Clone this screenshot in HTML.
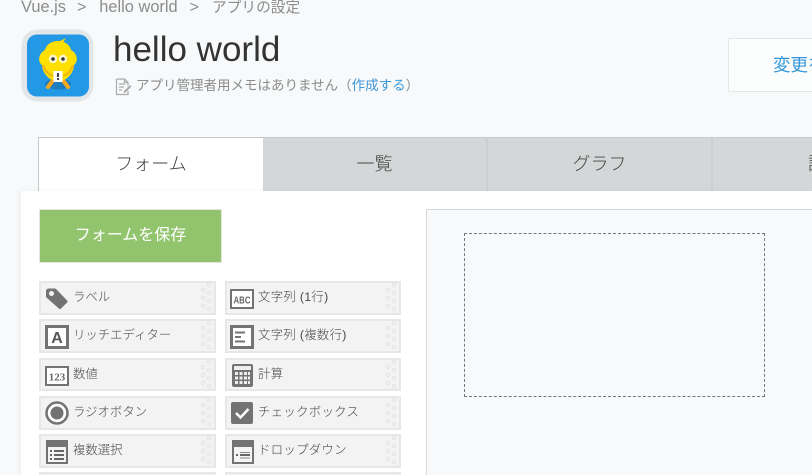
<!DOCTYPE html>
<html lang="ja"><head><meta charset="utf-8"><title>アプリの設定</title>
<style>
html,body{margin:0;padding:0;width:812px;height:475px;overflow:hidden}
body{background:#f7f9fa;font-family:"Liberation Sans","Noto Sans CJK JP",sans-serif;color:#333}
#w{position:relative;width:812px;height:475px;overflow:hidden}
.a{position:absolute;white-space:nowrap}
.tab{position:absolute;top:137px;height:53px;line-height:52px;text-align:center;background:#d4d7d7;border-top:1px solid #c6c9c9;border-right:2px solid #cccfcf;font-size:18px;font-weight:300;color:#444}
.it{position:absolute;width:173px;height:30px;background:#f2f3f2;border:2px solid #e6e8e7;font-size:12.400px;line-height:29px;color:#4a4a4a;font-weight:300}
.it span{position:absolute;left:32px;top:0;white-space:nowrap}
.it span.r{left:31px;letter-spacing:.3px}
.it svg{position:absolute}
.it i{position:absolute;right:2px;top:-2px;width:6px;height:32px;background-image:radial-gradient(circle at 50% 50%,#f0f1f0 1.100px,#e2e4e3 1.500px,#e2e4e3 2px,transparent 2.400px);background-size:6px 8px}
.it b{position:absolute;right:8px;top:3px;width:6px;height:24px;background-image:radial-gradient(circle at 50% 50%,#f0f1f0 1.100px,#e2e4e3 1.500px,#e2e4e3 2px,transparent 2.400px);background-size:6px 8px}
</style></head><body><div id="w">
<div class="a" style="left:21px;top:-3px;font-size:16.400px;line-height:20px;color:#8c8c8c">Vue.js<span style="margin:0 13px 0 11px;font-size:16px">&gt;</span>hello world<span style="margin:0 13px 0 12px;font-size:16px">&gt;</span><span style="font-size:14.700px">アプリの設定</span></div>
<svg class="a" style="left:21px;top:29px" width="73" height="73" viewBox="0 0 73 73">
<rect x="0.500" y="0.500" width="72" height="72" rx="16" fill="#e3e6e8"/>
<rect x="6" y="5.500" width="62" height="62" rx="10" fill="#2398e4"/>
<ellipse cx="37" cy="55" rx="13" ry="5.500" fill="#1c7cc0"/>
<path d="M33 50l-6 8M41 50l6 8" stroke="#f5a81c" stroke-width="4" stroke-linecap="round"/>
<path d="M37 13l8-4-4 6z" fill="#ffd800"/>
<path d="M37 12c7 0 12 4 13 9 6 3 8 11 3 15 0 6-4 11-8 14-4 2-12 2-16 0-4-3-8-8-8-14-5-4-3-12 3-15 1-5 6-9 13-9z" fill="#ffe000"/>
<path d="M22 36c2 7 7 10 10 11M52 36c-2 7-7 10-10 11" stroke="#f2b90f" stroke-width="2.500" fill="none"/>
<circle cx="32" cy="30" r="4.200" fill="#fff8d0"/><circle cx="42" cy="30" r="4.200" fill="#fff8d0"/>
<circle cx="32" cy="30" r="1.800" fill="#333"/><circle cx="42" cy="30" r="1.800" fill="#333"/>
<rect x="32.500" y="42" width="9" height="11" fill="#fff"/><rect x="36" y="44" width="2" height="4" fill="#444"/><rect x="36" y="49" width="2" height="2" fill="#444"/>
</svg>
<div class="a" style="left:113px;top:29px;font-size:35px;line-height:42px;color:#333">hello world</div>
<svg class="a" style="left:115px;top:78px" width="18" height="18" viewBox="0 0 18 18" fill="none" stroke="#aaa" stroke-width="1.200"><path d="M1.500 1h8l3.500 3.500v3M13 13v3.500H1.500V1M9.500 1v3.500H13M4 6h6M4 9h5M4 12h3"/><path d="M9 13l6-6 1.500 1.500-6 6-2 .5z" fill="#aaa" stroke="none"/></svg>
<div class="a" style="left:136px;top:76px;font-size:13.500px;line-height:20px;color:#8c8c8c">アプリ管理者用メモはありません（<span style="color:#3f97d6">作成する</span>）</div>
<div class="a" style="left:728px;top:38px;width:39px;height:52px;overflow:hidden;background:#fbfcfc;border:1px solid #e3e7e8;border-right:0;line-height:52px;font-size:17.500px;color:#3498db;padding-left:44px">変更を保存</div>

<div class="tab" style="left:263px;width:223px">一覧</div>
<div class="tab" style="left:488px;width:223px">グラフ</div>
<div class="tab" style="left:713px;width:4px;padding-left:95px;overflow:hidden;text-align:left;border-right:0;white-space:nowrap">設定</div>
<div class="tab" style="left:38px;width:224px;background:#fff;border-left:1px solid #c6c9c9;border-right:0">フォーム</div>
<div class="a" style="left:21px;top:191px;width:791px;height:284px;background:#fff;box-shadow:-3px -1px 5px rgba(0,0,0,.03)"></div>
<div class="a" style="left:39px;top:209px;width:181px;height:52px;border:1px solid #e3e7e3;background:#92c46e;color:#fff;font-size:16px;line-height:52px;text-align:center">フォームを保存</div>
<div class="a" style="left:426px;top:209px;width:386px;height:266px;background:#f7f9fa;border:solid #d5d7d8;border-width:1px 0 0 1px;box-sizing:border-box"></div>
<div class="a" style="left:464px;top:233px;width:301px;height:164px;border:1px dashed #777;box-sizing:border-box"></div>

<div class="it" style="left:39px;top:281px"><svg style="left:4px;top:3px" width="24" height="25" viewBox="0 0 24 25"><path d="M2.500 5a1 1 0 0 1 1-1h6.500L21 15.500 15 21.500 2.500 10.500z" fill="#737373" stroke="#737373" stroke-width="3" stroke-linejoin="round"/><circle cx="6.500" cy="7.500" r="2.500" fill="#f2f3f2"/></svg><span>ラベル</span><i></i><b></b></div>
<div class="it" style="left:39px;top:319px"><svg style="left:4px;top:4px" width="24" height="24" viewBox="0 0 24 24"><rect x="1.500" y="1.500" width="21" height="21" fill="#fff" stroke="#737373" stroke-width="3"/><text x="12" y="18" text-anchor="middle" font-family="Liberation Sans" font-weight="bold" font-size="16" fill="#555">A</text></svg><span>リッチエディター</span><i></i><b></b></div>
<div class="it" style="left:39px;top:358px;height:29px"><svg style="left:4px;top:6px" width="24" height="20" viewBox="0 0 24 20"><rect x="1" y="1" width="22" height="18" fill="#fff" stroke="#737373" stroke-width="2"/><text x="12" y="14.500" text-anchor="middle" font-family="Liberation Serif" font-weight="bold" font-size="11" fill="#666">123</text></svg><span>数値</span><i></i><b></b></div>
<div class="it" style="left:39px;top:396px"><svg style="left:4px;top:3px" width="24" height="24" viewBox="0 0 24 24"><circle cx="12" cy="12" r="10.500" fill="#fff" stroke="#737373" stroke-width="2.500"/><circle cx="12" cy="12" r="6.500" fill="#737373"/></svg><span>ラジオボタン</span><i></i><b></b></div>
<div class="it" style="left:39px;top:434px"><svg style="left:5px;top:4px" width="22" height="24" viewBox="0 0 22 24"><rect width="22" height="24" fill="#737373"/><rect x="2" y="7" width="18" height="15" fill="#f4f4f4"/><path d="M4 11h2M8 11h10M4 15h2M8 15h10M4 19h2M8 19h10" stroke="#666" stroke-width="2"/></svg><span>複数選択</span><i></i><b></b></div>
<div class="it" style="left:39px;top:472px;height:1px;border-bottom:0"></div>

<div class="it" style="left:225px;top:281px;width:172px"><svg style="left:3px;top:6px" width="24" height="20" viewBox="0 0 24 20"><rect x="1" y="1" width="22" height="18" fill="#fff" stroke="#737373" stroke-width="2"/><text x="12" y="14.500" text-anchor="middle" font-family="Liberation Sans" font-weight="bold" font-size="10.500" textLength="17" lengthAdjust="spacingAndGlyphs" fill="#666">ABC</text></svg><span class="r">文字列 (1行)</span><i></i><b></b></div>
<div class="it" style="left:225px;top:319px;width:172px"><svg style="left:3px;top:4px" width="24" height="24" viewBox="0 0 24 24"><rect x="1.500" y="1.500" width="21" height="21" fill="#fff" stroke="#737373" stroke-width="3"/><path d="M5 7.500h10M5 12h6M5 16.500h10" stroke="#737373" stroke-width="2"/></svg><span class="r">文字列 (複数行)</span><i></i><b></b></div>
<div class="it" style="left:225px;top:358px;width:172px;height:29px"><svg style="left:5px;top:4px" width="21" height="23" viewBox="0 0 21 23"><rect width="21" height="23" rx="2" fill="#737373"/><rect x="2" y="2" width="17" height="4" fill="#eee"/><path d="M3 8h3v3H3zM7.500 8h3v3h-3zM12 8h3v3h-3zM16 8h2v3h-2zM3 12.500h3v3H3zM7.500 12.500h3v3h-3zM12 12.500h3v3h-3zM16 12.500h2v3h-2zM3 17h3v3H3zM7.500 17h3v3h-3zM12 17h3v3h-3zM16 17h2v3h-2z" fill="#eee"/></svg><span class="r">計算</span><i></i><b></b></div>
<div class="it" style="left:225px;top:396px;width:172px"><svg style="left:4px;top:4px" width="22" height="22" viewBox="0 0 22 22"><rect width="22" height="22" rx="2" fill="#737373"/><path d="M5 11l4.500 4.500L17.500 7" stroke="#fff" stroke-width="2.500" fill="none"/></svg><span class="r">チェックボックス</span><i></i><b></b></div>
<div class="it" style="left:225px;top:434px;width:172px"><svg style="left:5px;top:4px" width="22" height="24" viewBox="0 0 22 24"><rect width="22" height="24" fill="#737373"/><rect x="2" y="7" width="18" height="15" fill="#f4f4f4"/><path d="M4 15h2M8 15h10" stroke="#666" stroke-width="2"/><path d="M8 12.500h10M8 18h10" stroke="#888" stroke-width="1"/></svg><span class="r">ドロップダウン</span><i></i><b></b></div>
<div class="it" style="left:225px;top:472px;width:172px;height:1px;border-bottom:0"></div>
</div></body></html>
